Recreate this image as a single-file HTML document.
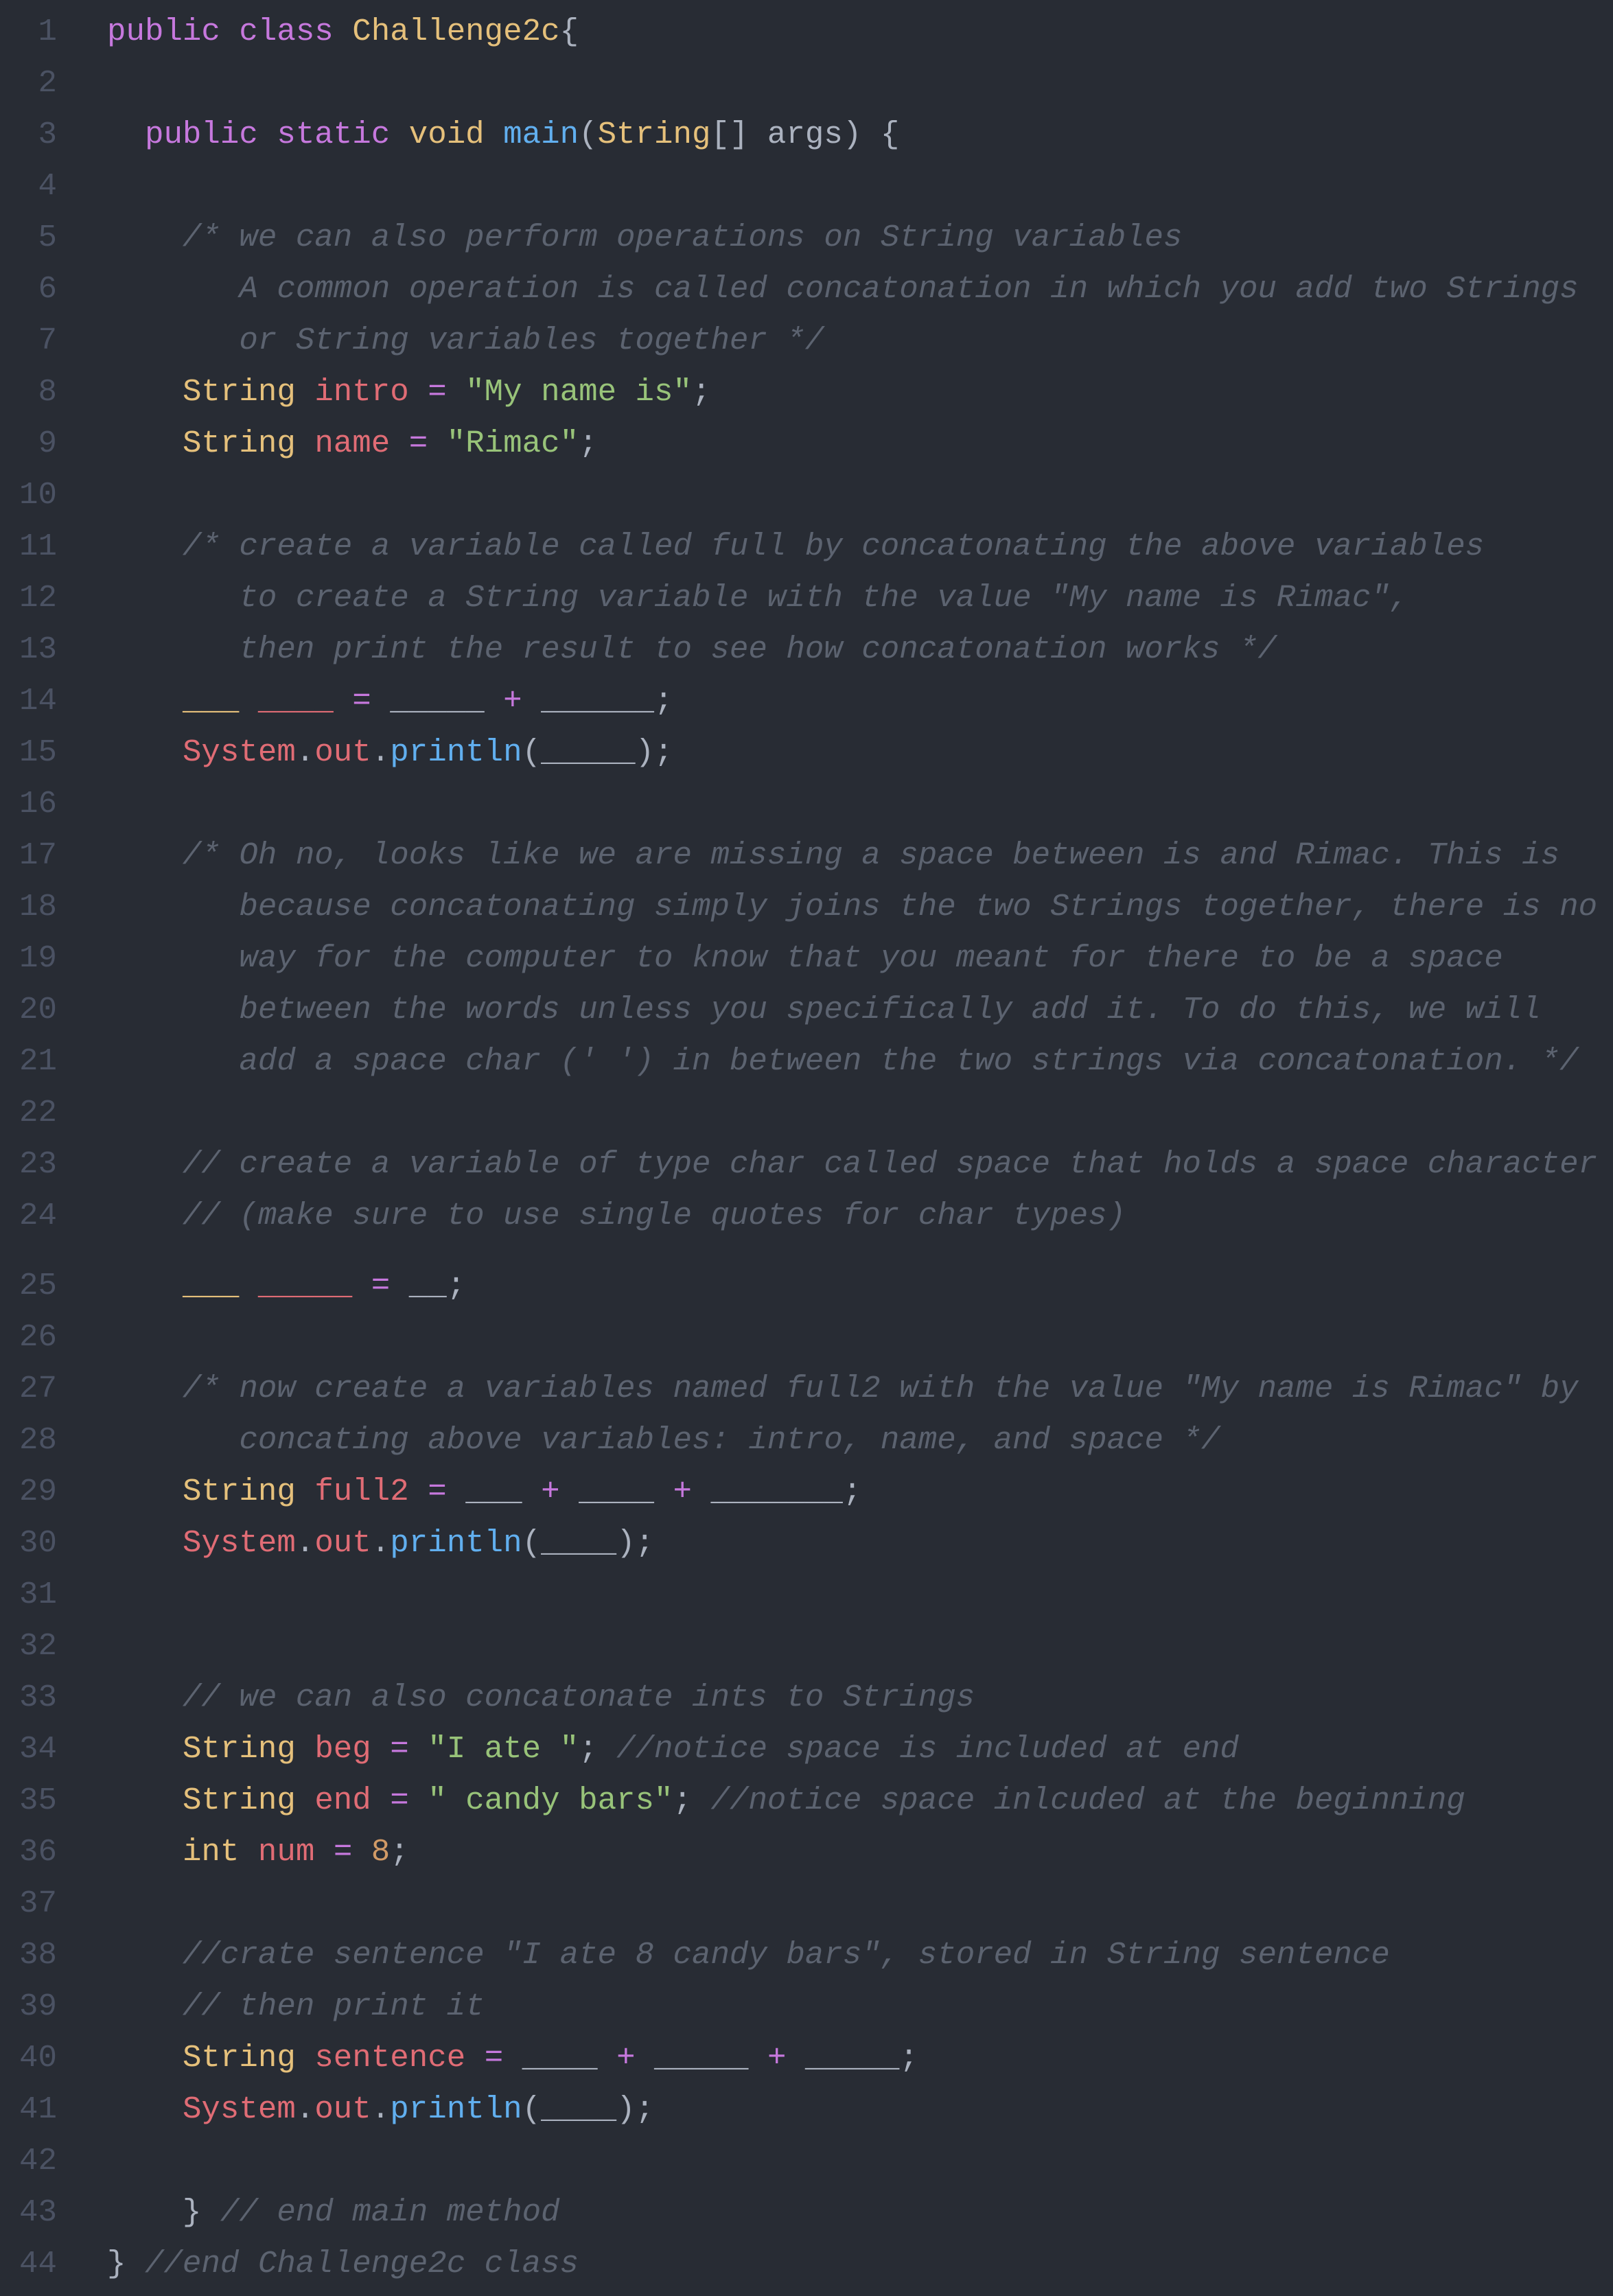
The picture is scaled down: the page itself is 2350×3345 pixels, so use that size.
<!DOCTYPE html>
<html><head><meta charset="utf-8"><style>
html,body{margin:0;padding:0;background:#282c34;}
body{width:2350px;height:3345px;position:relative;overflow:hidden;font-family:"Liberation Mono",monospace;font-size:45.8px;color:#abb2bf;}
.l{position:absolute;left:0;height:75px;line-height:75px;white-space:pre;width:2350px;}
.n{position:absolute;right:2267px;color:#4b5263;}
.c{position:absolute;left:156px;}
.k{color:#c678dd}.t{color:#e5c07b}.f{color:#61afef}.v{color:#e06c75}.s{color:#98c379}.m{color:#5c6370;font-style:italic}.o{color:#c678dd}.d{color:#d19a66}
.u{font-weight:bold}
</style></head><body>
<div class="l" style="top:9px"><span class="n">1</span><span class="c"><span class="k">public class</span> <span class="t">Challenge2c</span>{</span></div>
<div class="l" style="top:84px"><span class="n">2</span></div>
<div class="l" style="top:159px"><span class="n">3</span><span class="c">  <span class="k">public static</span> <span class="t">void</span> <span class="f">main</span>(<span class="t">String</span>[] args) {</span></div>
<div class="l" style="top:234px"><span class="n">4</span></div>
<div class="l" style="top:309px"><span class="n">5</span><span class="c m">    /* we can also perform operations on String variables</span></div>
<div class="l" style="top:384px"><span class="n">6</span><span class="c m">       A common operation is called concatonation in which you add two Strings</span></div>
<div class="l" style="top:459px"><span class="n">7</span><span class="c m">       or String variables together */</span></div>
<div class="l" style="top:534px"><span class="n">8</span><span class="c">    <span class="t">String</span> <span class="v">intro</span> <span class="o">=</span> <span class="s">"My name is"</span>;</span></div>
<div class="l" style="top:609px"><span class="n">9</span><span class="c">    <span class="t">String</span> <span class="v">name</span> <span class="o">=</span> <span class="s">"Rimac"</span>;</span></div>
<div class="l" style="top:684px"><span class="n">10</span></div>
<div class="l" style="top:759px"><span class="n">11</span><span class="c m">    /* create a variable called full by concatonating the above variables</span></div>
<div class="l" style="top:834px"><span class="n">12</span><span class="c m">       to create a String variable with the value "My name is Rimac",</span></div>
<div class="l" style="top:909px"><span class="n">13</span><span class="c m">       then print the result to see how concatonation works */</span></div>
<div class="l" style="top:984px"><span class="n">14</span><span class="c">    <span class="t u">___</span> <span class="v u">____</span> <span class="o">=</span> <span class="u">_____</span> <span class="o">+</span> <span class="u">______</span>;</span></div>
<div class="l" style="top:1059px"><span class="n">15</span><span class="c">    <span class="v">System</span>.<span class="v">out</span>.<span class="f">println</span>(<span class="u">_____</span>);</span></div>
<div class="l" style="top:1134px"><span class="n">16</span></div>
<div class="l" style="top:1209px"><span class="n">17</span><span class="c m">    /* Oh no, looks like we are missing a space between is and Rimac. This is</span></div>
<div class="l" style="top:1284px"><span class="n">18</span><span class="c m">       because concatonating simply joins the two Strings together, there is no</span></div>
<div class="l" style="top:1359px"><span class="n">19</span><span class="c m">       way for the computer to know that you meant for there to be a space</span></div>
<div class="l" style="top:1434px"><span class="n">20</span><span class="c m">       between the words unless you specifically add it. To do this, we will</span></div>
<div class="l" style="top:1509px"><span class="n">21</span><span class="c m">       add a space char (' ') in between the two strings via concatonation. */</span></div>
<div class="l" style="top:1584px"><span class="n">22</span></div>
<div class="l" style="top:1659px"><span class="n">23</span><span class="c m">    // create a variable of type char called space that holds a space character</span></div>
<div class="l" style="top:1734px"><span class="n">24</span><span class="c m">    // (make sure to use single quotes for char types)</span></div>
<div class="l" style="top:1836px"><span class="n">25</span><span class="c">    <span class="t u">___</span> <span class="v u">_____</span> <span class="o">=</span> <span class="u">__</span>;</span></div>
<div class="l" style="top:1911px"><span class="n">26</span></div>
<div class="l" style="top:1986px"><span class="n">27</span><span class="c m">    /* now create a variables named full2 with the value "My name is Rimac" by</span></div>
<div class="l" style="top:2061px"><span class="n">28</span><span class="c m">       concating above variables: intro, name, and space */</span></div>
<div class="l" style="top:2136px"><span class="n">29</span><span class="c">    <span class="t">String</span> <span class="v">full2</span> <span class="o">=</span> <span class="u">___</span> <span class="o">+</span> <span class="u">____</span> <span class="o">+</span> <span class="u">_______</span>;</span></div>
<div class="l" style="top:2211px"><span class="n">30</span><span class="c">    <span class="v">System</span>.<span class="v">out</span>.<span class="f">println</span>(<span class="u">____</span>);</span></div>
<div class="l" style="top:2286px"><span class="n">31</span></div>
<div class="l" style="top:2361px"><span class="n">32</span></div>
<div class="l" style="top:2436px"><span class="n">33</span><span class="c m">    // we can also concatonate ints to Strings</span></div>
<div class="l" style="top:2511px"><span class="n">34</span><span class="c">    <span class="t">String</span> <span class="v">beg</span> <span class="o">=</span> <span class="s">"I ate "</span>; <span class="m">//notice space is included at end</span></span></div>
<div class="l" style="top:2586px"><span class="n">35</span><span class="c">    <span class="t">String</span> <span class="v">end</span> <span class="o">=</span> <span class="s">" candy bars"</span>; <span class="m">//notice space inlcuded at the beginning</span></span></div>
<div class="l" style="top:2661px"><span class="n">36</span><span class="c">    <span class="t">int</span> <span class="v">num</span> <span class="o">=</span> <span class="d">8</span>;</span></div>
<div class="l" style="top:2736px"><span class="n">37</span></div>
<div class="l" style="top:2811px"><span class="n">38</span><span class="c m">    //crate sentence "I ate 8 candy bars", stored in String sentence</span></div>
<div class="l" style="top:2886px"><span class="n">39</span><span class="c m">    // then print it</span></div>
<div class="l" style="top:2961px"><span class="n">40</span><span class="c">    <span class="t">String</span> <span class="v">sentence</span> <span class="o">=</span> <span class="u">____</span> <span class="o">+</span> <span class="u">_____</span> <span class="o">+</span> <span class="u">_____</span>;</span></div>
<div class="l" style="top:3036px"><span class="n">41</span><span class="c">    <span class="v">System</span>.<span class="v">out</span>.<span class="f">println</span>(<span class="u">____</span>);</span></div>
<div class="l" style="top:3111px"><span class="n">42</span></div>
<div class="l" style="top:3186px"><span class="n">43</span><span class="c">    } <span class="m">// end main method</span></span></div>
<div class="l" style="top:3261px"><span class="n">44</span><span class="c">} <span class="m">//end Challenge2c class</span></span></div>
</body></html>
